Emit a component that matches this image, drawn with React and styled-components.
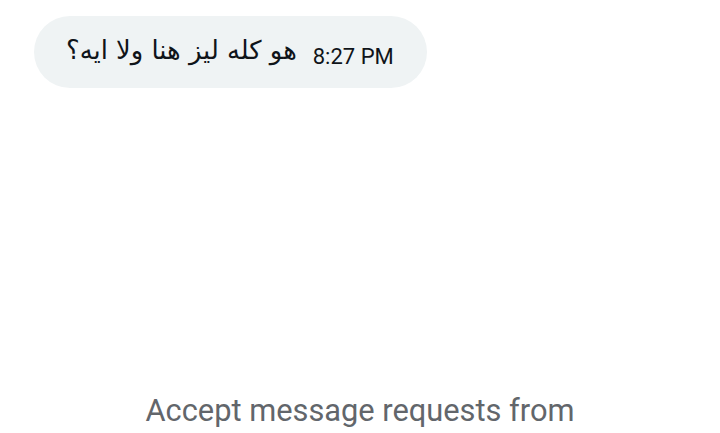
import React from "react";
import styled, { createGlobalStyle } from "styled-components";

const GlobalStyle = createGlobalStyle`
  html, body {
    margin: 0;
    padding: 0;
    background: #ffffff;
  }
  body {
    font-family: Roboto, "Liberation Sans", sans-serif;
  }
`;

const Screen = styled.div`
  width: 720px;
  height: 433px;
  overflow: hidden;
  display: flex;
  flex-direction: column;
  justify-content: space-between;
  background: #ffffff;
`;

const Thread = styled.div`
  display: flex;
  flex-direction: column;
  align-items: flex-start;
  padding: 16px 34px 0;
`;

const Bubble = styled.div`
  display: flex;
  align-items: center;
  gap: 16px;
  height: 72px;
  padding: 0 33px 0 32px;
  box-sizing: border-box;
  border-radius: 36px;
  background: #eff3f4;
  color: #0f1419;
`;

const MessageText = styled.span`
  direction: rtl;
  font-family: "DejaVu Sans", sans-serif;
  font-size: 25.8px;
  line-height: 1;
  padding-bottom: 2px;
`;

const Time = styled.span`
  font-size: 22px;
  color: #0f1419;
  padding-top: 8px;
`;

const Footer = styled.div`
  text-align: center;
  font-size: 30.8px;
  color: #62666b;
  height: 36px;
  line-height: 36px;
  margin-bottom: 4px;
`;

export default function App() {
  return (
    <>
      <GlobalStyle />
      <Screen>
        <Thread>
          <Bubble>
            <MessageText>هو كله ليز هنا ولا ايه؟</MessageText>
            <Time>8:27 PM</Time>
          </Bubble>
        </Thread>
        <Footer>Accept message requests from</Footer>
      </Screen>
    </>
  );
}
